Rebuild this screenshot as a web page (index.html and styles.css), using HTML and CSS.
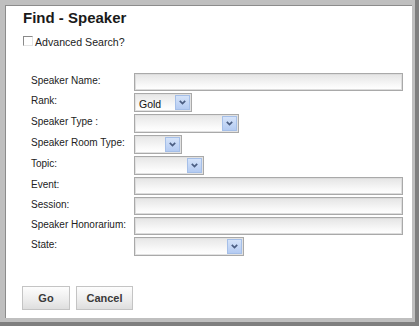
FILE: index.html
```html
<!doctype html>
<html>
<head>
  <meta charset="utf-8">
  <title>Find - Speaker</title>
  <link rel="stylesheet" href="styles.css">
</head>
<body>
  <div class="frame">
    <div class="panel">
      <h1 class="title">Find - Speaker</h1>
      <label class="advanced"><span class="check"></span>Advanced Search?</label>

      <div class="form">
        <span class="label">Speaker Name:</span>
        <span class="field"><span class="input"></span></span>

        <span class="label">Rank:</span>
        <span class="field">
          <span class="select w-rank"><span class="value">Gold</span><span class="drop"><svg width="7" height="5" viewBox="0 0 7 5"><path d="M0.8 0.8 L3.5 3.6 L6.2 0.8" /></svg></span></span>
        </span>

        <span class="label">Speaker Type :</span>
        <span class="field">
          <span class="select w-type"><span class="value"></span><span class="drop"><svg width="7" height="5" viewBox="0 0 7 5"><path d="M0.8 0.8 L3.5 3.6 L6.2 0.8" /></svg></span></span>
        </span>

        <span class="label">Speaker Room Type:</span>
        <span class="field">
          <span class="select w-room"><span class="value"></span><span class="drop"><svg width="7" height="5" viewBox="0 0 7 5"><path d="M0.8 0.8 L3.5 3.6 L6.2 0.8" /></svg></span></span>
        </span>

        <span class="label">Topic:</span>
        <span class="field">
          <span class="select w-topic"><span class="value"></span><span class="drop"><svg width="7" height="5" viewBox="0 0 7 5"><path d="M0.8 0.8 L3.5 3.6 L6.2 0.8" /></svg></span></span>
        </span>

        <span class="label">Event:</span>
        <span class="field"><span class="input"></span></span>

        <span class="label">Session:</span>
        <span class="field"><span class="input"></span></span>

        <span class="label">Speaker Honorarium:</span>
        <span class="field"><span class="input"></span></span>

        <span class="label">State:</span>
        <span class="field">
          <span class="select w-state"><span class="value"></span><span class="drop"><svg width="7" height="5" viewBox="0 0 7 5"><path d="M0.8 0.8 L3.5 3.6 L6.2 0.8" /></svg></span></span>
        </span>
      </div>

      <div class="actions">
        <button class="btn btn-go">Go</button>
        <button class="btn btn-cancel">Cancel</button>
      </div>
    </div>
  </div>
</body>
</html>
```

FILE: styles.css
```css
body {
  margin: 0;
  font-family: "Liberation Sans", Arial, sans-serif;
  color: #222;
}

.frame {
  box-sizing: border-box;
  height: 326px;
  padding: 5px 3px 4px 5px;
  background: #bfbfbf;
  border-right: 4px solid #7f7f7f;
  border-bottom: 4px solid #7f7f7f;
}

.panel {
  box-sizing: border-box;
  height: 100%;
  padding: 4px 9px 0 18px;
  background: #fff;
  box-shadow: inset 1px 1px 0 #8c8c8c;
}

.title {
  margin: 0;
  font-size: 15px;
  line-height: 18px;
  font-weight: bold;
  color: #1a1a1a;
}

.advanced {
  display: flex;
  align-items: flex-start;
  margin-top: 9px;
  font-size: 10.6px;
  line-height: 12px;
  color: #222;
}

.check {
  box-sizing: border-box;
  width: 10px;
  height: 10px;
  margin-right: 2px;
  border-top: 1px solid #8a8a8a;
  border-left: 1px solid #8a8a8a;
  border-right: 1px solid #e4e4e4;
  border-bottom: 1px solid #e4e4e4;
  background: #fff;
}

.form {
  display: grid;
  grid-template-columns: 103px 1fr;
  row-gap: 2px;
  margin: 25px 0 0 8px;
  font-size: 10px;
  line-height: 12px;
}

.label {
  padding-top: 2px;
  color: #222;
}

.field {
  display: flex;
}

.input {
  box-sizing: border-box;
  flex-grow: 1;
  height: 18px;
  border: 1px solid #a9a9a9;
  box-shadow: inset 0 0 0 1px #dcdcdc;
  background: linear-gradient(#e4e4e4, #fafafa 75%, #fff);
}

.select {
  box-sizing: border-box;
  display: flex;
  height: 19px;
  padding: 1px;
  border: 1px solid #a9a9a9;
  box-shadow: inset 0 0 0 1px #e2e2e2;
  background: linear-gradient(#e6e6e6, #fbfbfb 75%, #fff);
}

.value {
  flex-grow: 1;
  padding: 3px 0 0 3px;
  font-size: 10.5px;
  color: #111;
}

.drop {
  box-sizing: border-box;
  display: flex;
  align-items: center;
  justify-content: center;
  width: 15px;
  border: 1px solid #a5bfe8;
  background: linear-gradient(#d5e3f9, #b4cbf2);
}

.drop svg path {
  fill: none;
  stroke: #4b5e82;
  stroke-width: 1.7;
}

.w-rank { width: 58px; }
.w-type { width: 105px; }
.w-room { width: 48px; }
.w-topic { width: 70px; }
.w-state { width: 110px; }

.actions {
  display: flex;
  gap: 6px;
  margin: 30px 0 0 -1px;
}

.btn {
  box-sizing: border-box;
  height: 24px;
  padding: 0;
  border: 1px solid #c4c4c4;
  background: linear-gradient(#fdfdfd, #ececec 60%, #dedede);
  font-family: inherit;
  font-size: 11px;
  font-weight: bold;
  color: #3a3a3a;
}

.btn-go { width: 48px; }
.btn-cancel { width: 57px; }
```
